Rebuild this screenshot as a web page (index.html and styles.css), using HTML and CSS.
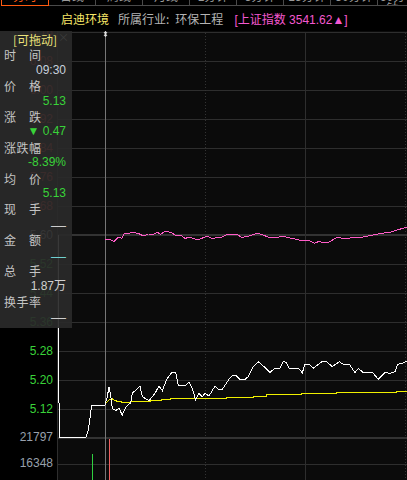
FILE: index.html
```html
<!DOCTYPE html>
<html lang="zh-CN">
<head>
  <meta charset="UTF-8" />
  <meta name="viewport" content="width=device-width, initial-scale=1.0" />
  <title>启迪环境 分时</title>
  <link rel="stylesheet" href="styles.css">
</head>
<body>
  <div class="tabs">
    <div class="tab active"><span>分时</span></div>
    <div class="tab"><span>日线</span></div>
    <div class="tab"><span>周线</span></div>
    <div class="tab"><span>月线</span></div>
    <div class="tab"><span>1分钟</span></div>
    <div class="tab"><span>5分钟</span></div>
    <div class="tab"><span>15分钟</span></div>
    <div class="tab"><span>30分钟</span></div>
    <div class="tab last"><span>60分钟</span></div>
  </div>

  <div class="title">
    <span class="stock">启迪环境</span>
    <span class="industry">所属行业:<span class="sep"></span>环保工程</span>
    <span class="index">[上证指数 3541.62▲]</span>
  </div>

  <div class="main">
    <div class="axis">
      <div class="price up">6.16</div>
      <div class="price up">6.08</div>
      <div class="price up">6.00</div>
      <div class="price up">5.92</div>
      <div class="price up">5.84</div>
      <div class="price up">5.76</div>
      <div class="price up">5.68</div>
      <div class="price flat">5.60</div>
      <div class="price down">5.52</div>
      <div class="price down">5.44</div>
      <div class="price down">5.36</div>
      <div class="price down">5.28</div>
      <div class="price down">5.20</div>
      <div class="price down">5.12</div>
      <div class="vol">21797</div>
      <div class="vol">16348</div>
    </div>

    <svg class="chart" width="350" height="449" viewBox="57 31 350 449">
      <g class="grid">
        <line x1="57" x2="407" y1="32.5" y2="32.5" />
        <line x1="57" x2="407" y1="61.5" y2="61.5" />
        <line x1="57" x2="407" y1="90.5" y2="90.5" />
        <line x1="57" x2="407" y1="119.5" y2="119.5" />
        <line x1="57" x2="407" y1="148.5" y2="148.5" />
        <line x1="57" x2="407" y1="177.5" y2="177.5" />
        <line x1="57" x2="407" y1="206.5" y2="206.5" />
        <line class="mid" x1="57" x2="407" y1="235" y2="235" />
        <line x1="57" x2="407" y1="264.5" y2="264.5" />
        <line x1="57" x2="407" y1="293.5" y2="293.5" />
        <line x1="57" x2="407" y1="322.5" y2="322.5" />
        <line x1="57" x2="407" y1="351.5" y2="351.5" />
        <line x1="57" x2="407" y1="380.5" y2="380.5" />
        <line x1="57" x2="407" y1="409.5" y2="409.5" />
        <line class="mid" x1="57" x2="407" y1="438" y2="438" />
        <line x1="57" x2="407" y1="464.5" y2="464.5" />
        <line x1="57.5" x2="57.5" y1="31" y2="480" />
        <line class="dot" x1="205.5" x2="205.5" y1="33" y2="480" />
        <line x1="305.5" x2="305.5" y1="33" y2="480" />
        <line class="dot" x1="405.5" x2="405.5" y1="33" y2="480" />
      </g>

      <line class="cursor" x1="105.5" x2="105.5" y1="31" y2="480" />
      <path class="cursor-mark" d="M105.5 31 L107.5 33 L106.5 33 L106.5 35 L107.5 35 L105.5 37 L103.5 35 L104.5 35 L104.5 33 L103.5 33 Z" />

      <polyline class="index-line" points="105,240 110,239.3 114,241.7 118.3,237.3 121.7,238.3 124.3,233.3 128.3,234 131.7,232.3 138.3,233.3 143.3,236 148.3,234 153.3,234.3 157.3,232.3 160.7,234.3 165,231 170.7,232.3 175,235 181.7,236 185,238.3 190,237.3 197.7,240 203.3,237.7 207.3,236 211.7,238.3 221.7,237.3 228.3,234 236,234 241.7,237.3 246.7,236.7 256.7,233.3 261.7,234.3 268.3,237.3 276.7,237.7 281.7,236 291.7,238.3 299,240 308.3,240 314.3,243.3 318.3,241.7 323.3,242.3 328.3,242.3 336.7,237.7 345,238.3 361.7,237.3 370,235.7 376.7,234.3 381.7,233.3 390,232.3 396.7,230 407,227.3" />

      <path class="avg-line" d="M105 404 L108.3 400.7 L111.7 398.3 L115 400.7 L125 402.7 L131.7 401.7 H150 V400.7 H161.5 V399.7 H170 V398.5 H226.5 V397.5 H253.5 V396 H266.5 V394.5 H301.5 V393.5 H336.5 V392.5 H396.5 V391.5 H407" />

      <path class="price-line" d="M58.5 235 V402 L59.5 404 V437 H86 L88.3 430 L90 418 L91.7 405 H105" />
      <polyline class="price-line" points="105,405 107.3,396.7 109,386.7 110.7,395 112.3,408.3 115.7,410.7 119,408.3 122.3,415 125.7,407.3 130.7,402.7 132.3,393.3 140,386 142.3,396.7 149,400.7 155,393.3 159,386 162.3,390.7 166.7,379.3 171.7,372.7 175.7,372.7 178.3,385 185,386 189,382.3 192.3,388.3 195.7,400 199,393.3 202.3,396.7 205,393.3 209,396 215,386 219,390 222.3,389.3 229,379.3 233.3,375 236.7,376 240,379.3 245,379.3 248.3,376.7 253.3,366.7 258.3,361.7 263.3,366 270,372.3 275,368.3 280,368.3 283.3,361.7 286,362.3 289.3,368.3 298.3,368.3 302.3,372.7 305,364.3 309.3,364.3 313.3,368.3 322.7,361 326.7,361.7 332.3,366.7 339.3,361.7 343.3,364.3 349.3,364.3 355,372.7 358.3,368.3 363.3,372.7 372.7,372.7 378.3,379.3 385,372.7 390,373.3 395,371.7 397.7,364.3 402.3,363.3 407,361" />

      <line class="bar-down" x1="92.5" x2="92.5" y1="454" y2="480" />
      <line class="bar-up" x1="109.5" x2="109.5" y1="439" y2="480" />
    </svg>

    <div class="info">
      <div class="drag">[可拖动]</div>
      <span class="close">×</span>
      <div class="label"><span>时</span><span>间</span></div>
      <div class="value time">09:30</div>
      <div class="label"><span>价</span><span>格</span></div>
      <div class="value down">5.13</div>
      <div class="label"><span>涨</span><span>跌</span></div>
      <div class="value down">▼ 0.47</div>
      <div class="label"><span>涨</span><span>跌</span><span>幅</span></div>
      <div class="value down">-8.39%</div>
      <div class="label"><span>均</span><span>价</span></div>
      <div class="value down">5.13</div>
      <div class="label"><span>现</span><span>手</span></div>
      <div class="value dash">—</div>
      <div class="label"><span>金</span><span>额</span></div>
      <div class="value dash cyan">—</div>
      <div class="label"><span>总</span><span>手</span></div>
      <div class="value">1.87万</div>
      <div class="label"><span>换</span><span>手</span><span>率</span></div>
      <div class="value dash">—</div>
    </div>
  </div>
</body>
</html>
```

FILE: styles.css
```css
body {
  margin: 0;
  width: 407px;
  height: 480px;
  overflow: hidden;
  background: #000;
  font-family: "Liberation Sans", "Noto Sans CJK SC", sans-serif;
  font-size: 12px;
  color: #c0c0c0;
}
.tabs {
  display: flex;
  height: 6px;
}
.tab {
  width: 46px;
  height: 5px;
  overflow: hidden;
  border-right: 1px solid #4a4a4a;
  border-bottom: 1px solid #4a4a4a;
  color: #9a9a9a;
  text-align: center;
}
.tab span {
  display: block;
  line-height: 12px;
  margin-top: -9px;
}
.tab.active {
  margin-left: 1px;
  border: 1px solid #ff5a10;
  border-top: none;
  color: #ff5a10;
}
.tab.last {
  flex: 1;
  border-right: none;
}
.title {
  display: flex;
  align-items: center;
  height: 25px;
  padding-left: 61px;
  font-family: "Noto Sans CJK SC", sans-serif;
  white-space: nowrap;
}
.stock {
  color: #f8e868;
  margin-right: 9px;
}
.industry {
  color: #b4b4b4;
  margin-right: 11px;
}
.sep {
  display: inline-block;
  width: 6px;
}
.index {
  color: #f458d0;
  font-family: "Liberation Sans", "Noto Sans CJK SC", sans-serif;
}
.main {
  position: relative;
  display: grid;
  grid-template-columns: 57px 350px;
  height: 449px;
}
.axis {
  overflow: hidden;
  padding-right: 4px;
  text-align: right;
}
.price {
  height: 29px;
  line-height: 29px;
}
.price:first-child {
  margin-top: -13px;
}
.price.up {
  color: #ff4040;
}
.price.flat {
  color: #c0c0c0;
}
.price.down {
  color: #39d339;
}
.vol {
  height: 26px;
  line-height: 26px;
  color: #98a0ac;
}
.chart {
  display: block;
  background: #0b0b0b;
}
.grid line {
  stroke: #2e2e2e;
  stroke-width: 1;
  shape-rendering: crispEdges;
}
.grid line.mid {
  stroke: #333;
  stroke-width: 2;
}
.grid line.dot {
  stroke: #333;
  stroke-dasharray: 1 2;
}
.cursor {
  stroke: #777;
  shape-rendering: crispEdges;
}
.cursor-mark {
  fill: #e0e0e0;
}
.price-line,
.index-line,
.avg-line {
  fill: none;
  stroke-width: 1;
  shape-rendering: crispEdges;
}
.price-line {
  stroke: #fff;
}
.index-line {
  stroke: #ff5cc8;
}
.avg-line {
  stroke: #f0f000;
}
.bar-down {
  stroke: #30d040;
  shape-rendering: crispEdges;
}
.bar-up {
  stroke: #f06060;
  shape-rendering: crispEdges;
}
.info {
  position: absolute;
  left: 0;
  top: 0;
  width: 72px;
  height: 297px;
  padding: 1px 6px 0 4px;
  box-sizing: border-box;
  background: rgba(42, 42, 42, 0.93);
  font-family: "Noto Sans CJK SC", sans-serif;
  line-height: 15.4px;
}
.drag {
  color: #ece27a;
  text-align: center;
}
.close {
  position: absolute;
  right: 3px;
  top: -1px;
  color: #3c3c3c;
  font-size: 11px;
}
.label {
  display: flex;
  justify-content: space-between;
  width: 37px;
  color: #c4c4c4;
}
.value {
  text-align: right;
  color: #d0d0d0;
  font-family: "Liberation Sans", "Noto Sans CJK SC", sans-serif;
}
.value.time {
  color: #c8d0dc;
}
.value.down {
  color: #39d339;
}
.value.dash {
  font-size: 15px;
  color: #cccccc;
}
.value.cyan {
  color: #70d0d0;
}
```
